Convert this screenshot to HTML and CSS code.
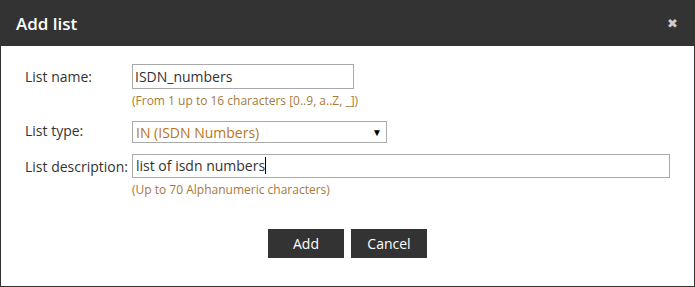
FILE: index.html
```html
<!DOCTYPE html>
<html lang="en">
<head>
    <meta charset="UTF-8">
    <title>Add list</title>
    <link rel="stylesheet" href="styles.css">
</head>
<body>
    <div class="dialog">
        <!-- Dialog Header -->
        <div class="dialog-header">
            <span class="dialog-title">Add list</span>
            <span class="close-button">&#10006;</span>
        </div>

        <div class="dialog-body">
            <div class="form-row name-row">
                <label class="form-label">List name:</label>
                <div class="form-field">
                    <input class="text-input name-input" type="text" value="ISDN_numbers">
                    <div class="hint">(From 1 up to 16 characters [0..9, a..Z, _])</div>
                </div>
            </div>

            <div class="form-row type-row">
                <label class="form-label">List type:</label>
                <div class="form-field">
                    <span class="select-wrap">
                        <select class="type-select">
                            <option>IN (ISDN Numbers)</option>
                        </select>
                        <span class="select-arrow">&#9660;</span>
                    </span>
                </div>
            </div>

            <div class="form-row desc-row">
                <label class="form-label">List description:</label>
                <div class="form-field">
                    <div class="text-input desc-input">list of isdn numbers<span class="caret"></span></div>
                    <div class="hint">(Up to 70 Alphanumeric characters)</div>
                </div>
            </div>

            <!-- Action Buttons -->
            <div class="dialog-buttons">
                <button class="dark-button">Add</button>
                <button class="dark-button">Cancel</button>
            </div>
        </div>
    </div>
</body>
</html>
```
FILE: styles.css
```css
html, body {
    margin: 0;
    padding: 0;
    height: 100%;
    font-family: "Open Sans", Arial, sans-serif;
    color: #333;
}
.dialog {
    width: 695px;
    height: 287px;
    box-sizing: border-box;
    border: 1px solid #333;
    display: flex;
    flex-direction: column;
    background: #fff;
}
.dialog-header {
    height: 46px;
    flex-shrink: 0;
    background: #333;
    display: flex;
    align-items: center;
    justify-content: space-between;
    padding: 0 17px 0 16px;
    margin: -1px -1px 0 -1px;
}
.dialog-title {
    color: #fff;
    font-size: 17px;
    font-weight: 600;
    margin-top: 1px;
}
.close-button {
    color: #ccc;
    font-size: 13px;
    font-family: "DejaVu Sans", sans-serif;
    font-weight: bold;
    margin-top: 1px;
}
.dialog-body {
    padding: 18px 0 0 24px;
    display: flex;
    flex-direction: column;
}
.form-row {
    display: flex;
    align-items: flex-start;
}
.name-row {
    margin-bottom: 12px;
}
.type-row {
    margin-bottom: 11px;
}
.form-label {
    width: 107px;
    font-size: 14px;
    line-height: 25px;
}
.type-row .form-label {
    line-height: 20px;
}
.form-field {
    display: flex;
    flex-direction: column;
}
.text-input {
    height: 25px;
    box-sizing: border-box;
    border: 1px solid #aaa;
    padding: 0 2px;
    font-family: "Open Sans", Arial, sans-serif;
    font-size: 14px;
    color: #333;
    outline: none;
}
.name-input {
    width: 222px;
}
.desc-input {
    width: 538px;
    height: 24px;
    line-height: 22px;
    padding: 0 3px;
}
.caret {
    display: inline-block;
    width: 1px;
    height: 17px;
    background: #000;
    vertical-align: -3px;
}
.hint {
    font-size: 12px;
    line-height: 16px;
    color: #a57a3c;
    margin-top: 4px;
}
.select-wrap {
    position: relative;
    display: block;
    height: 22px;
}
.type-select {
    appearance: none;
    display: block;
    width: 255px;
    height: 22px;
    border: 1px solid #aaa;
    border-radius: 0;
    background: #fff;
    padding: 0 3px;
    font-family: "Open Sans", Arial, sans-serif;
    font-size: 14px;
    color: #b8761c;
    outline: none;
}
.select-arrow {
    position: absolute;
    right: 5px;
    top: 4px;
    font-size: 10px;
    color: #000;
}
.dialog-buttons {
    display: flex;
    justify-content: center;
    gap: 7px;
    margin: 31px 0 0 -24px;
}
.dark-button {
    width: 76px;
    height: 29px;
    background: #333;
    color: #fff;
    border: none;
    font-family: "Open Sans", Arial, sans-serif;
    font-size: 14px;
    cursor: pointer;
}
```
